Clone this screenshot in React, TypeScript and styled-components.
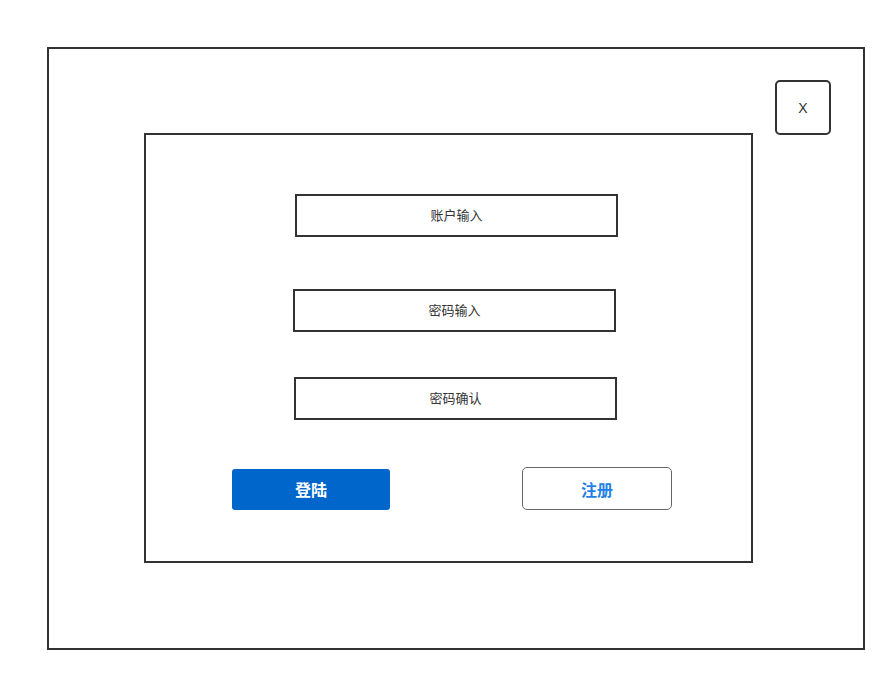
import React from 'react';
import styled, { createGlobalStyle } from 'styled-components';

const GlobalStyle = createGlobalStyle`
  html, body {
    margin: 0;
    padding: 0;
    background: #ffffff;
  }
  body {
    font-family: "Noto Sans CJK SC", "Noto Sans", "Liberation Sans", sans-serif;
  }
`;

const Page = styled.div`
  width: 896px;
  height: 681px;
  padding: 47px 0 0 47px;
  box-sizing: border-box;
`;

const Dialog = styled.div`
  width: 818px;
  height: 603px;
  box-sizing: border-box;
  border: 2px solid #333333;
  padding: 31px 32px 0 95px;
  display: flex;
  flex-direction: column;
`;

const Header = styled.div`
  display: flex;
  justify-content: flex-end;
  height: 53px;
`;

const CloseButton = styled.button`
  width: 56px;
  height: 55px;
  box-sizing: border-box;
  border: 2px solid #333333;
  border-radius: 5px;
  background: #ffffff;
  color: #333333;
  font-family: "Liberation Sans", sans-serif;
  font-size: 14px;
  padding: 0;
  display: flex;
  align-items: center;
  justify-content: center;
`;

const Panel = styled.div`
  width: 609px;
  height: 430px;
  box-sizing: border-box;
  border: 2px solid #333333;
  padding: 59px 0 0 0;
  display: flex;
  flex-direction: column;
`;

const Field = styled.div<{ $left: number; $top: number; $height: number }>`
  margin-left: ${(p) => p.$left}px;
  margin-top: ${(p) => p.$top}px;
  width: 323px;
  height: ${(p) => p.$height}px;
  box-sizing: border-box;
  border: 2px solid #333333;
  padding-bottom: 2px;
  display: flex;
  align-items: center;
  justify-content: center;
  font-size: 13px;
  color: #333333;
`;

const Actions = styled.div`
  display: flex;
  align-items: flex-start;
  margin-top: 47px;
  padding-left: 86px;
`;

const PrimaryButton = styled.button`
  width: 158px;
  height: 41px;
  margin-top: 2px;
  border: none;
  border-radius: 3px;
  background: #0066cc;
  color: #ffffff;
  font-family: inherit;
  font-weight: 700;
  font-size: 16px;
  padding: 0 0 2px 0;
`;

const SecondaryButton = styled.button`
  width: 150px;
  height: 43px;
  margin-left: 132px;
  box-sizing: border-box;
  border: 1px solid #666666;
  border-radius: 5px;
  background: #ffffff;
  color: #1f7fe5;
  font-family: inherit;
  font-weight: 700;
  font-size: 16px;
  padding: 0;
`;

export default function App() {
  return (
    <>
      <GlobalStyle />
      <Page>
        <Dialog>
          <Header>
            <CloseButton>X</CloseButton>
          </Header>
          <Panel>
            <Field $left={149} $top={0} $height={43}>账户输入</Field>
            <Field $left={147} $top={52} $height={43}>密码输入</Field>
            <Field $left={148} $top={45} $height={43}>密码确认</Field>
            <Actions>
              <PrimaryButton>登陆</PrimaryButton>
              <SecondaryButton>注册</SecondaryButton>
            </Actions>
          </Panel>
        </Dialog>
      </Page>
    </>
  );
}
